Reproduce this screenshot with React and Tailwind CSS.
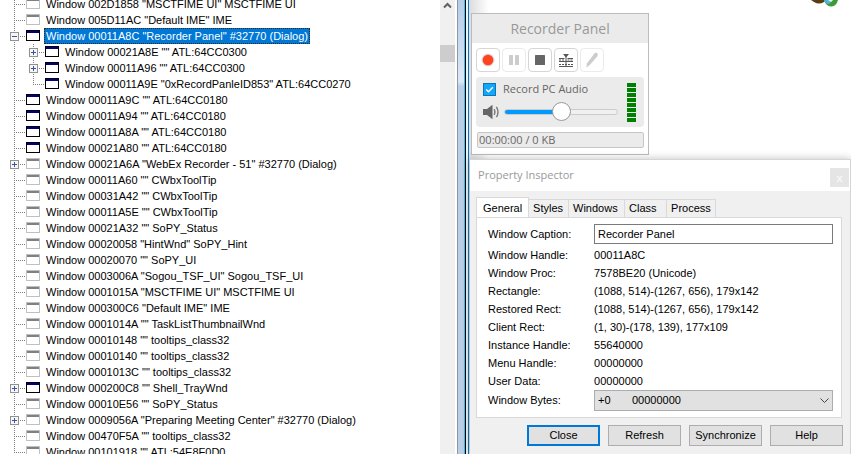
import React from "react";

const windows = [
  { text: 'Window 002D1858 "MSCTFIME UI" MSCTFIME UI' },
  { text: 'Window 005D11AC "Default IME" IME' },
  { text: 'Window 00011A8C "Recorder Panel" #32770 (Dialog)', active: true, toggle: "-", selected: true },
  { text: 'Window 00021A8E "" ATL:64CC0300', active: true, toggle: "+", child: true },
  { text: 'Window 00011A96 "" ATL:64CC0300', active: true, toggle: "+", child: true },
  { text: 'Window 00011A9E "0xRecordPanleID853" ATL:64CC0270', active: true, child: true, last: true },
  { text: 'Window 00011A9C "" ATL:64CC0180', active: true },
  { text: 'Window 00011A94 "" ATL:64CC0180', active: true },
  { text: 'Window 00011A8A "" ATL:64CC0180', active: true },
  { text: 'Window 00021A80 "" ATL:64CC0180', active: true },
  { text: 'Window 00021A6A "WebEx Recorder - 51" #32770 (Dialog)', toggle: "+" },
  { text: 'Window 00011A60 "" CWbxToolTip' },
  { text: 'Window 00031A42 "" CWbxToolTip' },
  { text: 'Window 00011A5E "" CWbxToolTip' },
  { text: 'Window 00021A32 "" SoPY_Status' },
  { text: 'Window 00020058 "HintWnd" SoPY_Hint' },
  { text: 'Window 00020070 "" SoPY_UI' },
  { text: 'Window 0003006A "Sogou_TSF_UI" Sogou_TSF_UI' },
  { text: 'Window 0001015A "MSCTFIME UI" MSCTFIME UI' },
  { text: 'Window 000300C6 "Default IME" IME' },
  { text: 'Window 0001014A "" TaskListThumbnailWnd' },
  { text: 'Window 00010148 "" tooltips_class32' },
  { text: 'Window 00010140 "" tooltips_class32' },
  { text: 'Window 0001013C "" tooltips_class32' },
  { text: 'Window 000200C8 "" Shell_TrayWnd', active: true, toggle: "+" },
  { text: 'Window 00010E56 "" SoPY_Status' },
  { text: 'Window 0009056A "Preparing Meeting Center" #32770 (Dialog)', toggle: "+" },
  { text: 'Window 00470F5A "" tooltips_class32' },
  { text: 'Window 00101918 "" ATL:54E8F0D0' },
];

const properties = [
  ["Window Handle:", "00011A8C"],
  ["Window Proc:", "7578BE20 (Unicode)"],
  ["Rectangle:", "(1088, 514)-(1267, 656), 179x142"],
  ["Restored Rect:", "(1088, 514)-(1267, 656), 179x142"],
  ["Client Rect:", "(1, 30)-(178, 139), 177x109"],
  ["Instance Handle:", "55640000"],
  ["Menu Handle:", "00000000"],
  ["User Data:", "00000000"],
];

function Branch({ toggle, last }) {
  return (
    <svg width="16" height="16" className="shrink-0" shapeRendering="crispEdges" fill="none" aria-hidden="true">
      <path d={last ? "M4.5 0V9" : "M4.5 0V16"} stroke="#808080" strokeDasharray="1 1" />
      <path d="M4 8.5H15" stroke="#808080" strokeDasharray="1 1" />
      {toggle && (
        <>
          <rect x="0.5" y="4.5" width="8" height="8" fill="#f6f6f6" stroke="#919191" />
          <path d="M2 8.5H7" stroke="#3a569c" />
          {toggle === "+" && <path d="M4.5 6V11" stroke="#3a569c" />}
        </>
      )}
    </svg>
  );
}

function Trunk() {
  return (
    <svg width="19" height="16" className="shrink-0" shapeRendering="crispEdges" aria-hidden="true">
      <path d="M4.5 0V16" stroke="#808080" strokeDasharray="1 1" />
    </svg>
  );
}

function WindowIcon({ active }) {
  return (
    <svg width="14" height="16" className="shrink-0" shapeRendering="crispEdges" aria-hidden="true">
      <rect x="0.5" y="2.5" width="13" height="10" fill="#fff" stroke={active ? "#000" : "#c0c0c0"} />
      <rect x="1" y="3" width="12" height="2" fill={active ? "#000080" : "#808080"} />
    </svg>
  );
}

function WindowTree() {
  return (
    <ul role="tree" className="-mt-1 min-w-0 flex-1 overflow-hidden pl-2.5 text-[11px] leading-4 text-black">
      {windows.map((w) => (
        <li key={w.text} role="treeitem" aria-selected={!!w.selected} className="flex h-4 whitespace-nowrap">
          {w.child && <Trunk />}
          <Branch toggle={w.toggle} last={w.last} />
          <WindowIcon active={w.active} />
          <span
            className={
              w.selected
                ? "ml-1 bg-[#0078d7] px-0.5 text-white outline-1 -outline-offset-1 outline-dotted outline-[#3a2410]"
                : "ml-1 px-0.5"
            }
          >
            {w.text}
          </span>
        </li>
      ))}
    </ul>
  );
}

function ScrollBar() {
  return (
    <div className="flex w-[15px] shrink-0 flex-col bg-[#f0f0f0]">
      <button aria-label="Scroll up" className="flex h-[45px] justify-center">
        <svg width="9" height="9" className="mt-px" fill="none" aria-hidden="true">
          <path d="M1 6.5L4.5 3L8 6.5" stroke="#606060" strokeWidth="2" />
        </svg>
      </button>
      <div className="h-[17px] bg-[#cdcdcd]" />
    </div>
  );
}

function WindowEdge() {
  return (
    <div className="flex shrink-0" aria-hidden="true">
      <div className="w-0.5 bg-white" />
      <div className="w-px bg-[#8c96a5]" />
      <div className="w-1.5 bg-gradient-to-b from-[#b4cce8] from-0% via-[#dce8f6] via-18% to-[#b9cfe8] to-19%" />
      <div className="w-px bg-[#35c4e8]" />
      <div className="w-px bg-black" />
      <div className="w-0.5 bg-[#eef3f8]" />
      <div className="w-px bg-[#0a74ce]" />
    </div>
  );
}

function ToolButton({ label, dim, children }) {
  return (
    <button
      aria-label={label}
      disabled={dim}
      className={
        dim
          ? "flex size-6 items-center justify-center rounded-sm border border-[#ebebeb] bg-white"
          : "flex size-6 items-center justify-center rounded-sm border border-[#d6d6d6] bg-white"
      }
    >
      {children}
    </button>
  );
}

function RecorderPanel() {
  return (
    <section className="w-[178px] border border-[#bcbcbc] bg-white font-['Open_Sans','Noto_Sans',sans-serif]">
      <h2 className="bg-[#ebebeb] text-center text-sm leading-[29px] text-[#999]">Recorder Panel</h2>
      <div className="flex gap-0.5 px-1 pt-[5px]">
        <ToolButton label="Record">
          <svg width="14" height="14" aria-hidden="true">
            <circle cx="7" cy="7" r="6.5" fill="#d9d9d9" />
            <circle cx="7" cy="7" r="5.3" fill="#ff4321" />
          </svg>
        </ToolButton>
        <ToolButton label="Pause" dim>
          <svg width="10" height="10" fill="#ccc" aria-hidden="true">
            <rect width="4" height="10" rx="0.5" />
            <rect x="6" width="4" height="10" rx="0.5" />
          </svg>
        </ToolButton>
        <ToolButton label="Stop">
          <svg width="10" height="10" aria-hidden="true">
            <rect width="10" height="10" rx="0.5" fill="#666" />
          </svg>
        </ToolButton>
        <ToolButton label="Mark">
          <svg width="16" height="16" fill="none" stroke="#555" aria-hidden="true">
            <path d="M5 2H11L8 5.5Z" fill="#555" stroke="none" />
            <path d="M8 4V14" />
            <path d="M1 6.5H6.5M9.5 6.5H15M1 9.5H15M1 14.5H15" />
            <path d="M1 8H6.5M9.5 8H15M1 12.5H15" strokeDasharray="2 1" />
          </svg>
        </ToolButton>
        <ToolButton label="Annotate" dim>
          <svg width="14" height="16" fill="#ccc" aria-hidden="true">
            <path d="M10.2 0.8Q12.2 0.2 13 2.3L12.3 4.3L4.8 13L1.3 15.5L2 11.2L9.2 1.8Z" />
          </svg>
        </ToolButton>
      </div>
      <div className="mx-1 mt-[5px] flex h-[50px] rounded-[4px] bg-[#ebebeb] pl-[7px] pr-2">
        <div className="flex flex-1 flex-col">
          <label className="mt-1.5 flex h-[13px] items-center text-[11px] text-[#666]">
            <span className="relative mr-[7px] flex size-[13px]">
              <input
                type="checkbox"
                defaultChecked
                className="peer size-[13px] appearance-none border border-[#0b76b5] bg-white checked:bg-[#13a7fa]"
              />
              <svg viewBox="0 0 13 13" fill="none" className="pointer-events-none absolute inset-0 hidden peer-checked:block" aria-hidden="true">
                <path d="M3.2 6.5L5.5 8.8L9.8 4.3" stroke="#fff" strokeWidth="1.3" />
              </svg>
            </span>
            Record PC Audio
          </label>
          <div className="mt-1.5 flex h-5 items-center">
            <svg width="18" height="16" fill="none" className="mr-[3px] shrink-0" aria-hidden="true">
              <path d="M0 5H4L9.5 0.8V15.2L4 11H0Z" fill="#666" />
              <path d="M11.2 5.2Q12.8 8 11.2 10.8M13.4 2.8Q16.6 8 13.4 13.2" stroke="#777" strokeWidth="1.4" />
            </svg>
            <input
              type="range"
              aria-label="Volume"
              defaultValue="50"
              className="h-5 w-[114px] appearance-none bg-transparent [&::-webkit-slider-runnable-track]:h-1.5 [&::-webkit-slider-runnable-track]:rounded-sm [&::-webkit-slider-runnable-track]:border [&::-webkit-slider-runnable-track]:border-[#ccc] [&::-webkit-slider-runnable-track]:bg-[linear-gradient(to_right,#0099ff_50%,#f0f0f0_50%)] [&::-webkit-slider-runnable-track]:bg-origin-border [&::-webkit-slider-thumb]:-mt-2 [&::-webkit-slider-thumb]:size-[19px] [&::-webkit-slider-thumb]:appearance-none [&::-webkit-slider-thumb]:rounded-full [&::-webkit-slider-thumb]:border [&::-webkit-slider-thumb]:border-[#999] [&::-webkit-slider-thumb]:bg-white"
            />
          </div>
        </div>
        <div className="mt-1.5 flex flex-col gap-px">
          {Array.from({ length: 8 }, (_, i) => (
            <div key={i} className="h-1 w-[9px] bg-[#008000]" />
          ))}
        </div>
      </div>
      <div className="mb-1.5 ml-[5px] mr-1 mt-[5px] h-4 rounded-[2px] border border-[#c6c6c6] bg-[#ebebeb] pl-px text-[11px] leading-[14px] text-[#666]">
        00:00:00 / 0 KB
      </div>
    </section>
  );
}

const tabWidths = {
  Styles: "w-10",
  Windows: "w-14",
  Class: "w-[42px]",
  Process: "w-[49px]",
};

function Tab({ name }) {
  return (
    <button role="tab" aria-selected="false" className={`${tabWidths[name]} h-[18px] border-r border-t border-[#d9d9d9] bg-[#f0f0f0] pl-1 text-left`}>
      {name}
    </button>
  );
}

function ActionButton({ primary, children }) {
  return (
    <button
      className={
        primary
          ? "h-[21px] w-[73px] border-2 border-[#0078d7] bg-[#e1e1e1]"
          : "h-[21px] w-[73px] border border-[#adadad] bg-[#e1e1e1]"
      }
    >
      {children}
    </button>
  );
}

function PropertyInspector() {
  return (
    <section className="ml-px flex flex-1 flex-col border-r border-t border-[#d5d5d5] bg-[#f0f0f0] text-[11px] text-black shadow-[0_0_8px_rgba(0,0,0,0.25)]">
      <header className="flex h-[31px] items-center justify-between bg-white pl-2 pr-px">
        <h2 className="font-['Open_Sans','Noto_Sans',sans-serif] text-[11px] text-[#999]">Property Inspector</h2>
        <button aria-label="Close window" className="mt-1 size-[19px] bg-[#e5e5e5] font-bold leading-4 text-[#f7f7f7]">
          x
        </button>
      </header>
      <div className="flex flex-col pl-1.5 pr-2 pt-1.5">
        <div role="tablist" className="flex items-end">
          <button role="tab" aria-selected="true" className="-mb-px h-[21px] w-[53px] border border-b-0 border-[#d9d9d9] bg-white">
            General
          </button>
          <Tab name="Styles" />
          <Tab name="Windows" />
          <Tab name="Class" />
          <Tab name="Process" />
        </div>
        <div className="border border-[#d9d9d9] bg-white pb-1.5 pl-[11px] pr-2 pt-1.5">
          <div className="flex items-center">
            <label htmlFor="caption" className="w-[106px]">Window Caption:</label>
            <input id="caption" defaultValue="Recorder Panel" className="h-5 min-w-0 flex-1 border border-[#7a7a7a] bg-white px-[3px]" />
          </div>
          <dl className="mt-0.5">
            {properties.map(([name, value]) => (
              <div key={name} className="flex leading-[18px]">
                <dt className="w-[106px]">{name}</dt>
                <dd>{value}</dd>
              </div>
            ))}
          </dl>
          <div className="flex items-center">
            <label htmlFor="bytes" className="w-[106px]">Window Bytes:</label>
            <div className="relative flex flex-1">
              <select id="bytes" className="h-[21px] w-full appearance-none border border-[#adadad] bg-[#e1e1e1] px-[3px]">
                <option>{"+0\u00a0\u00a0\u00a0\u00a0\u00a0\u00a0\u00a000000000"}</option>
              </select>
              <svg width="9" height="6" fill="none" className="pointer-events-none absolute right-1 top-2" aria-hidden="true">
                <path d="M0.5 0.5L4.5 4.5L8.5 0.5" stroke="#444" />
              </svg>
            </div>
          </div>
        </div>
      </div>
      <div className="flex justify-end gap-2 pr-[7px] pt-[7px]">
        <ActionButton primary>Close</ActionButton>
        <ActionButton>Refresh</ActionButton>
        <ActionButton>Synchronize</ActionButton>
        <ActionButton>Help</ActionButton>
      </div>
    </section>
  );
}

export default function App() {
  return (
    <main className="flex h-screen overflow-hidden bg-white font-['Liberation_Sans',Arial,sans-serif]">
      <div className="flex w-[calc(55%+1px)] shrink-0">
        <WindowTree />
        <ScrollBar />
        <WindowEdge />
      </div>
      <div className="flex min-w-0 flex-1 flex-col bg-gradient-to-r from-[#dcdcdc] to-white to-[20px]">
        <div className="flex items-start justify-between pb-1 pl-0.5">
          <div className="pt-[13px]">
            <RecorderPanel />
          </div>
          <svg width="28" height="7" className="mr-3" aria-hidden="true">
            <path d="M0 0H15L13 2Q8 5 3 2Z" fill="#5b3d12" />
            <path d="M13 0H27Q25 7 20 6.5Q15 6 13 0Z" fill="#3f9a36" />
            <path d="M13 0H22L18 4Q14 4 13 0Z" fill="#4fb4dc" />
            <path d="M17 0H22L20 2Z" fill="#e4f5fb" />
          </svg>
        </div>
        <PropertyInspector />
      </div>
    </main>
  );
}
